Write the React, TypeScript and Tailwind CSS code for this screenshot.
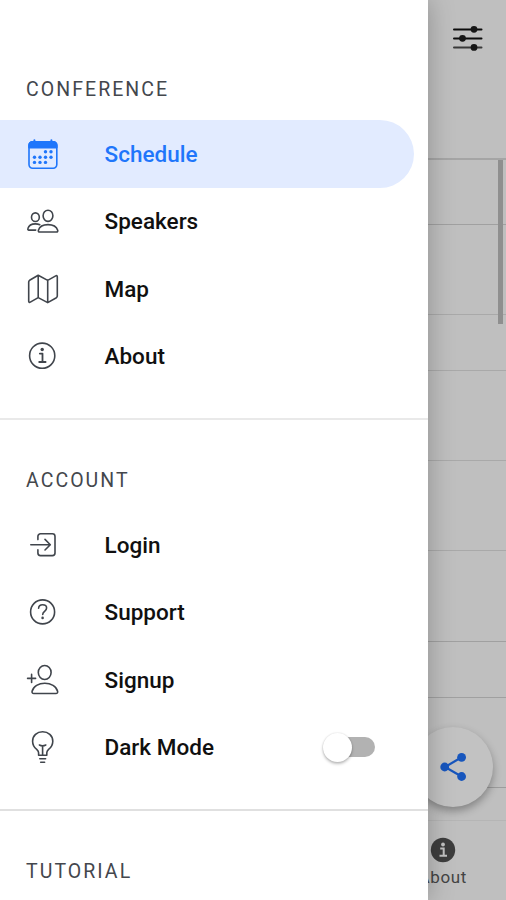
import { JSX, ReactNode, useState } from 'react';

interface IconProps {
  children: ReactNode;
}

function Icon({ children }: IconProps): JSX.Element {
  return (
    <svg
      width="36"
      height="36"
      viewBox="0 0 36 36"
      fill="none"
      stroke="currentColor"
      strokeWidth="1.6"
      strokeLinecap="round"
      strokeLinejoin="round"
      className="shrink-0"
    >
      {children}
    </svg>
  );
}

// [x, y] of every day dot on the calendar
const days = [
  [20.5, 15.8], [26, 15.8],
  [9.5, 21.2], [15, 21.2], [20.5, 21.2], [26, 21.2],
  [9.5, 26.4], [15, 26.4], [20.5, 26.4],
];

const calendarIcon = (
  <Icon>
    <rect x="4" y="5.8" width="27.8" height="26.4" rx="3.6" />
    <path d="M4 11.6V9.2a3.4 3.4 0 0 1 3.4-3.4h21a3.4 3.4 0 0 1 3.4 3.4v2.4z" fill="currentColor" />
    <path d="M9.4 4.2v2M26.4 4.2v2" strokeWidth="2" />
    {days.map(([x, y]) => (
      <circle key={`${x}-${y}`} cx={x} cy={y} r="1.7" fill="currentColor" stroke="none" />
    ))}
  </Icon>
);

const peopleIcon = (
  <Icon>
    <ellipse cx="23" cy="12.8" rx="4.9" ry="5.6" />
    <path d="M14.6 29c-1 0-1.5-.8-1.2-1.8 1.1-3.6 5-5.6 9.6-5.6s8.5 2 9.7 5.6c.3 1-.2 1.8-1.2 1.8z" />
    <ellipse cx="10.4" cy="14.2" rx="3.9" ry="4.3" />
    <path d="M14.8 21.7c-1.300-.6-2.800-.8-4.400-.8-3.600 0-6.600 1.600-7.500 4.600-.3.900.1 1.600 1 1.600h6.800" />
  </Icon>
);

const mapIcon = (
  <Icon>
    <path d="M13.2 4.3 4.600 9.300Q3.700 9.900 3.700 11V30.200Q3.800 31.900 5.300 31.100L13.200 26.600 22.700 31.600 31.400 26.700Q32.300 26.100 32.300 25V5.800Q32.200 4.100 30.700 4.900L22.700 9.400ZM13.200 4.300V26.600M22.700 9.400V31.600" />
  </Icon>
);

const infoIcon = (
  <Icon>
    <circle cx="17.2" cy="17.7" r="12.6" />
    <path d="M14.8 15.6h2.7v8.3M14.2 24h6.4" strokeWidth="1.8" />
    <circle cx="17.2" cy="11.5" r="1.7" fill="currentColor" stroke="none" />
  </Icon>
);

const loginIcon = (
  <Icon>
    <path d="M12.9 12.6V9.4a2.6 2.6 0 0 1 2.6-2.6h11.9A2.6 2.6 0 0 1 30 9.4v16.6a2.6 2.6 0 0 1-2.6 2.6H15.5a2.6 2.6 0 0 1-2.6-2.6v-3.2" />
    <path d="M5.8 17.7H25M20 12.4l5.3 5.3-5.3 5.3" />
  </Icon>
);

const helpIcon = (
  <Icon>
    <circle cx="17.6" cy="17.9" r="12" />
    <path d="M13.6 14.2c.2-2.4 1.9-3.400 4-3.400s4 1.200 4 3.200c0 3.400-3.900 3.200-3.900 6.400" />
    <circle cx="17.6" cy="23.9" r="1.3" fill="currentColor" stroke="none" />
  </Icon>
);

const personAddIcon = (
  <Icon>
    <ellipse cx="19.7" cy="10.5" rx="6.4" ry="7" />
    <path d="M8.8 31.5c-1.4 0-2-.9-1.7-2.2 1.200-5 6.600-8.100 12.700-8.100s11.600 3.100 12.800 8.100c.3 1.300-.3 2.200-1.700 2.200z" />
    <path d="M6.600 12.400v8M2.600 16.400h8" />
  </Icon>
);

const bulbIcon = (
  <Icon>
    <path d="M13.6 26.2v-2.5c0-1.4-.8-2.4-1.9-3.4A10.2 10.2 0 0 1 7.6 12.2C7.6 6.5 12 2.7 17.6 2.7s10.2 3.8 10.2 9.5a10.2 10.2 0 0 1-4.2 8.1c-1.1 1-1.8 2-1.8 3.4v2.5z" />
    <path d="M17.6 25.7v-8.9M14.4 16c2 1.1 4.4 1.1 6.4 0M14.8 29.7h5.8M15.7 33.3h3.9" />
  </Icon>
);

interface MenuItemProps {
  icon: ReactNode;
  label: string;
  active?: boolean;
  children?: ReactNode;
}

function MenuItem({ icon, label, active = false, children }: MenuItemProps): JSX.Element {
  return (
    <li
      className={`mr-[14px] flex h-[67.5px] items-center rounded-r-full pl-[25px] ${
        active ? 'bg-[#e2ebff] text-[#1f76fb]' : 'text-[#40454c]'
      }`}
    >
      {icon}
      <span
        className={`ml-[43.5px] pt-[2px] text-[22.5px] font-medium tracking-[0.02px] ${
          active ? '' : 'text-[#101010]'
        }`}
      >
        {label}
      </span>
      {children}
    </li>
  );
}

function MenuHeader({ children }: { children: ReactNode }): JSX.Element {
  return (
    <h2 className="flex h-[62px] items-center pt-px pl-[26px] text-[19.5px] tracking-[2.05px] text-[#44474d]">
      {children}
    </h2>
  );
}

function Toggle(): JSX.Element {
  const [on, setOn] = useState(false);

  return (
    <button
      type="button"
      role="switch"
      aria-checked={on}
      onClick={() => setOn(!on)}
      className="mr-[39px] ml-auto flex h-5 w-[48px] items-center rounded-full bg-[#b2b2b2]"
    >
      <span
        className={`size-[29px] shrink-0 rounded-full bg-white shadow-[0_2px_3px_rgba(0,0,0,0.25),0_0_2px_rgba(0,0,0,0.15)] ${
          on ? 'translate-x-[22px]' : '-translate-x-[4px]'
        }`}
      />
    </button>
  );
}

function Schedule(): JSX.Element {
  return (
    <main className="flex h-full flex-col">
      <header className="flex h-[158px] shrink-0 items-start justify-end pt-[21px] pr-5">
        <svg width="36" height="36" viewBox="0 0 36 36" stroke="#0c0c0c" strokeWidth="2" strokeLinecap="round">
          <path d="M4 8.500h27.500M4 17.500h27.500" />
          <path d="M4 26.500h27.500" stroke="#3a3a3a" />
          <g fill="#161616" stroke="none">
            <circle cx="24" cy="8.300" r="3.400" />
            <circle cx="12.500" cy="17.300" r="3.400" />
            <circle cx="24" cy="26.400" r="3.400" />
          </g>
        </svg>
      </header>
      <div className="relative min-h-0 flex-1 overflow-hidden border-t-2 border-[#a5a5a5]">
        <div className="h-[65px] border-b border-[#a0a0a0]" />
        <div className="h-[90px] border-b border-[#a9a9a9]" />
        <div className="h-[56px] border-b border-[#a9a9a9]" />
        <div className="h-[90px] border-b border-[#a9a9a9]" />
        <div className="h-[90px] border-b border-[#a9a9a9]" />
        <div className="h-[91px] border-b border-[#a0a0a0]" />
        <div className="h-[56px] border-b border-[#a0a0a0]" />
        <div className="h-[90px] border-b border-[#9c9c9c]" />
        <div className="absolute top-0 right-[3px] h-[164px] w-[5px] bg-[#8f8f8f]" />
        <button
          type="button"
          className="absolute right-[13px] bottom-[13px] flex size-20 items-center justify-center rounded-full bg-[#c2c2c2] text-[#1756bd] shadow-[0_4px_9px_rgba(0,0,0,0.32)]"
        >
          <svg width="28" height="30" viewBox="0 0 28 30" stroke="currentColor" strokeWidth="2.2">
            <path d="M22.600 5.300 6 15 22.600 24.500" fill="none" />
            <g fill="currentColor" stroke="none">
              <circle cx="22.600" cy="5.300" r="4.400" />
              <circle cx="5.700" cy="15" r="4.400" />
              <circle cx="22.600" cy="24.500" r="4.400" />
            </g>
          </svg>
        </button>
      </div>
      <footer className="grid h-[80px] shrink-0 grid-cols-4 border-t border-[#b5b5b5] text-[#444]">
        <div className="col-start-4 flex flex-col items-center pt-4">
          <svg width="26" height="26" viewBox="0 0 26 26">
            <circle cx="13" cy="13" r="12.2" fill="#3d3d3d" />
            <circle cx="13" cy="7.5" r="1.9" fill="#c2c2c2" />
            <path d="M10.2 11.5h3.5v7M9.5 18.8h7.5" fill="none" stroke="#c2c2c2" strokeWidth="2" />
          </svg>
          <span className="mt-[2px] text-[17px] leading-6 tracking-[0.6px]">About</span>
        </div>
      </footer>
    </main>
  );
}

export default function App(): JSX.Element {
  return (
    <div className="relative h-[900px] w-[506px] overflow-hidden bg-[#bfbfbf] font-['Roboto',sans-serif]">
      <Schedule />
      <aside className="absolute inset-y-0 left-0 w-[428px] overflow-hidden bg-white shadow-[0_0_25px_rgba(0,0,0,0.26)]">
        <section className="border-b-2 border-[#e9e9e9] pt-[58px] pb-[28px]">
          <MenuHeader>CONFERENCE</MenuHeader>
          <ul>
            <MenuItem icon={calendarIcon} label="Schedule" active />
            <MenuItem icon={peopleIcon} label="Speakers" />
            <MenuItem icon={mapIcon} label="Map" />
            <MenuItem icon={infoIcon} label="About" />
          </ul>
        </section>
        <section className="border-b-2 border-[#e0e0e0] pt-[29px] pb-[28px]">
          <MenuHeader>ACCOUNT</MenuHeader>
          <ul>
            <MenuItem icon={loginIcon} label="Login" />
            <MenuItem icon={helpIcon} label="Support" />
            <MenuItem icon={personAddIcon} label="Signup" />
            <MenuItem icon={bulbIcon} label="Dark Mode">
              <Toggle />
            </MenuItem>
          </ul>
        </section>
        <section className="pt-[29px]">
          <MenuHeader>TUTORIAL</MenuHeader>
        </section>
      </aside>
    </div>
  );
}
